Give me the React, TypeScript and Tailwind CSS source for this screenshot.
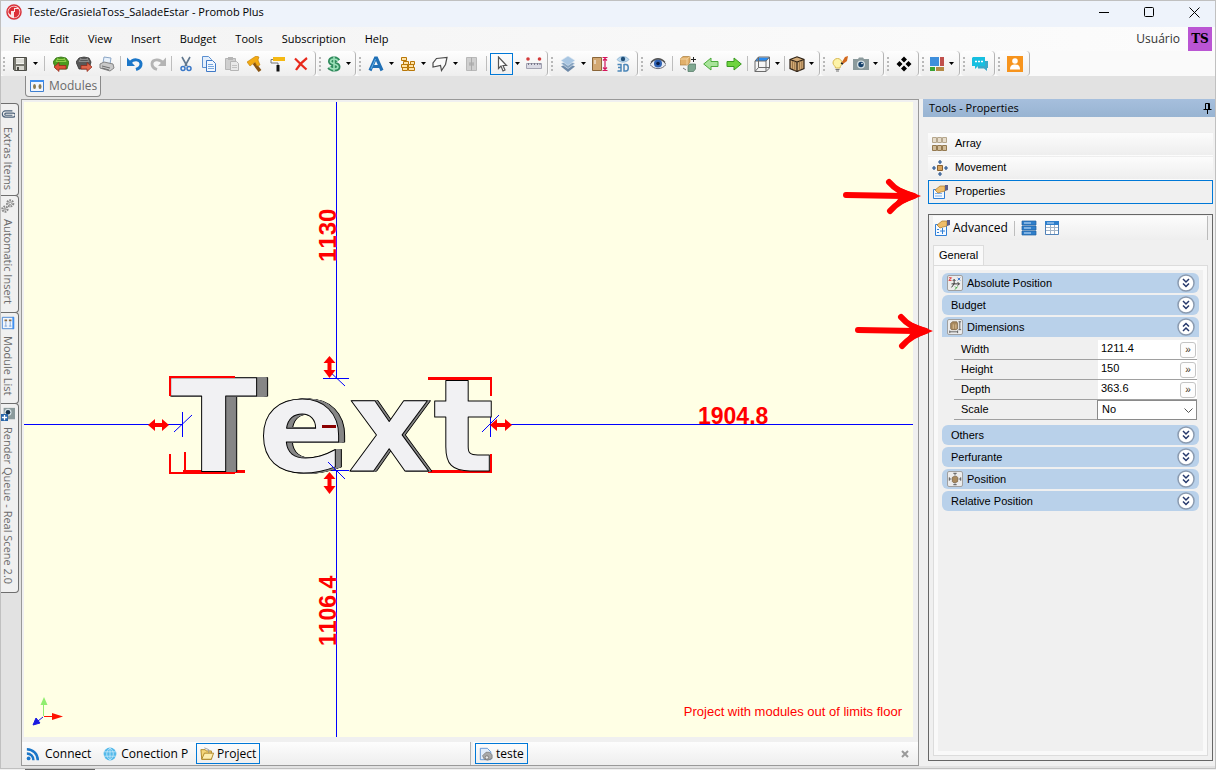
import type { ReactNode } from "react";

const ui = "font-['Open_Sans','Noto_Sans',sans-serif]";

const Icon = ({ children, size = 16 }: { children: ReactNode; size?: number }) => (
  <svg width={size} height={size} viewBox="0 0 16 16" fill="none" className="shrink-0" aria-hidden="true">
    {children}
  </svg>
);

const icons: Record<string, ReactNode> = {
  save: (
    <>
      <path d="M1.500 1.500h13v13h-12l-1-1z" fill="#77776f" stroke="#4b4b45" />
      <path d="M4 2h8v6H4z" fill="#f4f4f0" />
      <path d="M4 4h8M4 6h8" stroke="#c8c8c0" />
      <path d="M4 10h8v4H4z" fill="#d7d7d0" />
      <path d="M5 11h2v3H5z" fill="#4b4b45" />
    </>
  ),
  boxGreen: (
    <>
      <path d="M3 2l5-1 5 1 3 4-2 7H3L0 6z" fill="#4c9a1e" stroke="#2f6d10" strokeWidth=".8" />
      <path d="M4 3.500h8M3 5.500h10M5 2l-2 4M11 2l2 4" stroke="#8fd04c" />
      <path d="M1 11l5-4.500v3h7v3.500H6v2.500z" fill="#e0523a" stroke="#8d2416" strokeWidth=".7" />
    </>
  ),
  boxDark: (
    <>
      <path d="M3 2l5-1 5 1 2 4-2 7H3L0 6z" fill="#585858" stroke="#333" strokeWidth=".8" />
      <path d="M4 3.500h8M3 5.500h10M5 2l-2 4M11 2l2 4" stroke="#8c8c8c" />
      <path d="M16 11l-5-4.500v3H5v3.500h6v2.500z" fill="#e0654a" stroke="#8d2416" strokeWidth=".7" />
    </>
  ),
  printer: (
    <>
      <path d="M5 1l7 1-1 6-7-1z" fill="#e8f1fb" stroke="#8ba6c6" />
      <path d="M1 8l4-2 9 2 1 4-4 3-10-3z" fill="#c9c9c9" stroke="#858585" />
      <path d="M3 10l8 2M3 12l7 2" stroke="#6e6e6e" />
    </>
  ),
  undo: (
    <>
      <path d="M3 7C6 2.500 13.500 3 14 7.500c.2 3-2 5-5 6" stroke="#1b76c8" strokeWidth="3" />
      <path d="M0 1.500V10h8z" fill="#1b76c8" />
    </>
  ),
  redo: (
    <>
      <path d="M13 7C10 2.500 2.500 3 2 7.500c-.2 3 2 5 5 6" stroke="#b4b4b4" strokeWidth="2.800" />
      <path d="M16 1.500V10H8z" fill="#b4b4b4" />
    </>
  ),
  cut: (
    <>
      <path d="M4 1l5 9M12 1l-5 9" stroke="#61788f" strokeWidth="1.600" />
      <circle cx="5" cy="12.500" r="2" stroke="#3a78c8" strokeWidth="1.500" />
      <circle cx="11" cy="12.500" r="2" stroke="#3a78c8" strokeWidth="1.500" />
    </>
  ),
  copy: (
    <>
      <path d="M1.500.500h6l3 3v8h-9z" fill="#e3eefb" stroke="#5b8fd0" />
      <path d="M5.500 4.500h6l3 3v8h-9z" fill="#f1f7ff" stroke="#3f79c6" />
      <path d="M7 8.500h5M7 10.500h6M7 12.500h6" stroke="#79a7dd" />
    </>
  ),
  paste: (
    <>
      <path d="M1.500 2.500h10v11h-10z" fill="#cfcfcf" stroke="#b5b5b5" />
      <path d="M4 1h5v3H4z" fill="#b5b5b5" />
      <path d="M6.500 5.500h6l2 2v7h-8z" fill="#e9e9e9" stroke="#b5b5b5" />
      <path d="M8 9.500h5M8 11.500h5" stroke="#c2c2c2" />
    </>
  ),
  hammer: (
    <>
      <path d="M7 7l6 8" stroke="#8a5410" strokeWidth="3.500" />
      <path d="M0 6l9-6 3 1-1 3 2 5-3 1-2-4-5 4z" fill="#f2aa12" stroke="#c07c05" strokeWidth=".6" />
    </>
  ),
  roller: (
    <>
      <path d="M3 1h12v4H3z" fill="#f5b914" />
      <path d="M3 3.500H1v3.500h7v3" stroke="#777" />
      <path d="M6.500 9h3v6.500h-3z" fill="#111" />
    </>
  ),
  del: <path d="M2 2.500c3 3 7 7 11.500 11M14 2c-4 3-8 7-11 12" stroke="#e8291c" strokeWidth="2.200" />,
  money: (
    <>
      <path d="M12 5C10 2 4.500 2.500 4.500 5.500 4.500 8.500 12 7.500 12 10.700 12 13.800 5 13.500 3.500 11M8 .5v15" stroke="#2f8a5c" strokeWidth="5" />
      <path d="M12 5C10 2 4.500 2.500 4.500 5.500 4.500 8.500 12 7.500 12 10.700 12 13.800 5 13.500 3.500 11M8 1v14" stroke="#9be0b8" strokeWidth="1.600" />
    </>
  ),
  letter: (
    <>
      <path d="M2 14.500L7.500 2h1L14 14.500M4.500 10.500h7" stroke="#1f6fb5" strokeWidth="3.200" />
      <path d="M3 13L7.500 3" stroke="#5fb0e8" />
    </>
  ),
  bricks: (
    <path
      d="M1.500 1.500h5v3h-5zM3.500 5.500h5v3h-5zM10.500 5.500h4v3h-4zM1.500 8.500h6v3h-6zM8.500 8.500h5v3h-5zM2.500 11.500h5v3h-5zM8.500 11.500h6v3h-6z"
      fill="#ffe2a6"
      stroke="#b87708"
    />
  ),
  shape: <path d="M4.500 2.500L15 1.500l-1.500 7-4 6-1-5L1 11V7z" fill="#fbfbfb" stroke="#4c4c4c" strokeWidth="1.200" />,
  panel: (
    <>
      <path d="M2.500 1.500h10v13h-10z" fill="#cfcfcf" stroke="#b8b8b8" />
      <path d="M7.500 1.500v13M5 8h5M6 6v4M9 6v4" stroke="#aaa" />
    </>
  ),
  cursor: <path d="M4.500 1v11.500L7 10l2 5 2-1-2-4.500h3.500z" fill="#fff" stroke="#555" strokeWidth="1.200" />,
  ruler: (
    <>
      <path d="M.5 7.500h15v5H.5z" fill="#dadae4" stroke="#a3a3b2" />
      <path d="M2.500 7v2M5.500 7v2M8.500 7v2M11.500 7v2M14 7v2" stroke="#77778a" />
      <circle cx="2" cy="3" r="1.800" fill="#d43b3b" />
      <circle cx="13.500" cy="3" r="1.800" fill="#d43b3b" />
    </>
  ),
  layers: (
    <>
      <path d="M8 7l7 3.500L8 16l-7-5.500z" fill="#6d89a8" />
      <path d="M8 4.500l7 3-7 5-7-5z" fill="#86a3c0" stroke="#dfe9f3" strokeWidth=".6" />
      <path d="M8 0l7 4.500-7 5-7-5z" fill="#a9c6e2" stroke="#dfe9f3" strokeWidth=".6" />
    </>
  ),
  door: (
    <>
      <path d="M.5 1.500h9v13h-9z" fill="#d2a772" stroke="#8a6538" />
      <path d="M3 4v4" stroke="#fff" />
      <path d="M13 2v12M10.500 1.500h5M10.500 14.500h5M11 4.500l2-2 2 2M11 11.500l2 2 2-2" stroke="#d4145a" strokeWidth="1.200" />
    </>
  ),
  eye3d: (
    <>
      <path d="M2 3.500C5-.5 11-.5 14 3.500 11 7 5 7 2 3.500z" fill="#bcd9ef" stroke="#7ea8c8" strokeWidth=".7" />
      <circle cx="8" cy="3" r="2.200" fill="#1f4e78" />
      <path d="M2.500 8.500h3.500v6.500H2.500M3 11.500h3M9 8v7h2c3 0 3-6.500 0-6.500H9" stroke="#4b86b8" strokeWidth="1.500" />
    </>
  ),
  eye: (
    <>
      <path d="M0 8.500C4 1.500 12 1.500 16 8.500 12 14 4 14 0 8.500z" fill="#e9edf4" stroke="#6e6e7a" />
      <circle cx="8" cy="7.500" r="4" fill="#2f62b5" />
      <circle cx="8" cy="7.500" r="1.800" fill="#0b1d46" />
      <path d="M1 6.500C5 1.500 11 1.500 15 6.500" stroke="#555" strokeWidth="1.300" />
    </>
  ),
  boxes: (
    <>
      <path d="M0 3l3-2.500h7V6L8 9H0z" fill="#e2b06a" stroke="#a87c3c" strokeWidth=".7" />
      <path d="M0 3h7v6M7 3l3-2.500" stroke="#f6dcae" strokeWidth=".8" />
      <path d="M8 10l2-2h5.500v5l-2 2.500H8z" fill="#7fa891" stroke="#4f7661" strokeWidth=".7" />
      <path d="M13.500 1v5M11 3.500h5" stroke="#222" />
      <path d="M3 12l3 2" stroke="#777" />
    </>
  ),
  left: <path d="M.7 8L8 2v3.500h7v5H8V14z" fill="#a8e39a" stroke="#4cab3c" />,
  right: <path d="M15.300 8L8 2v3.500H1v5h7V14z" fill="#6fd43f" stroke="#3a9a20" />,
  cube: (
    <>
      <path d="M4 1.500h11.500l-3 3.500H1z" fill="#2b8cf0" />
      <path d="M1 5l3.500-4h11v11L12 15.500H1zM1 5h11v10.500M12 5l3.500-4M4.500 1v10.500h11M4.500 11.500L1 15.500" stroke="#6b6b6b" />
    </>
  ),
  crate: (
    <>
      <path d="M1 3.500L8 .8l7 2.700v9L8 15.500l-7-3z" fill="#d2ab78" stroke="#2d2115" strokeWidth="1.200" />
      <path d="M1 3.500L8 6l7-2.500M8 6v9.500" stroke="#2d2115" strokeWidth="1.200" />
      <path d="M3.500 5v8M5.700 5.500v9M10.500 5.500v9M12.800 5v8" stroke="#a17a4a" />
    </>
  ),
  bulb: (
    <>
      <path d="M1 7a4.500 4.500 0 119 0c0 2-2 3-2 5H3.500c0-2-2.500-3-2.500-5z" fill="#fdf3a8" stroke="#d8b84e" />
      <path d="M3.500 13.500h4M4 15h3" stroke="#777" />
      <path d="M10 6l3-5 3-1-1 5-4 3z" fill="#d2691e" />
      <path d="M9 7l2 1" stroke="#222" strokeWidth="1.500" />
    </>
  ),
  camera: (
    <>
      <path d="M0 3h5l1-1.500h4L11 3h5v11H0z" fill="#8b9a9c" />
      <circle cx="8" cy="8.500" r="4" fill="#d6e2e6" />
      <circle cx="8" cy="8.500" r="2.700" fill="#17426b" />
      <circle cx="9" cy="7.500" r=".8" fill="#fff" />
    </>
  ),
  diamonds: <path d="M8 .5L11 3.500 8 6.500 5 3.500zM8 9.500l3 3-3 3-3-3zM3.500 5l3 3-3 3-3-3zM12.500 5l3 3-3 3-3-3z" fill="#000" />,
  tiles: (
    <>
      <path d="M1 1h9v9H1z" fill="#3f8fdc" />
      <path d="M11 1h4v9h-4z" fill="#c0504d" />
      <path d="M1 11h5v4H1z" fill="#3aa335" />
      <path d="M7 11h8v4H7z" fill="#b58a45" />
    </>
  ),
  chat: (
    <>
      <path d="M5 5h11v7h-1v3l-3-2.500H6z" fill="#3aa9c9" />
      <path d="M1 1h12v9H6l-3 3v-3H0V2z" fill="#17bfe0" />
      <path d="M3 5.500h2M6 5.500h2M9 5.500h2" stroke="#fff" strokeWidth="1.500" />
    </>
  ),
  person: (
    <>
      <path d="M0 0h16v16H0z" fill="#f7941d" />
      <circle cx="8" cy="5" r="2.800" fill="#fff" />
      <path d="M3 13.500c0-4 2-5 5-5s5 1 5 5z" fill="#fff" />
    </>
  ),
  modules: (
    <>
      <path d="M1.500 2.500h13v11h-13z" fill="#f2f6fc" stroke="#3f7fd0" />
      <path d="M1 2h14v2H1z" fill="#3f8ff0" />
      <ellipse cx="5.500" cy="8.500" rx="1.500" ry="2.500" fill="#8a7a50" />
      <ellipse cx="11" cy="8.500" rx="1.500" ry="2.500" fill="#8a7a50" />
    </>
  ),
  array: (
    <>
      <path d="M.5 1.500h4v5h-4zM5.500 1.500h4v5h-4zM10.500 1.500h4v5h-4z" fill="#e6dccb" stroke="#b5a68c" />
      <path d="M.5 9.500h4v5h-4zM5.500 9.500h4v5h-4zM10.500 9.500h4v5h-4z" fill="#d0bb98" stroke="#94794f" />
    </>
  ),
  movement: (
    <>
      <path d="M5.500 5.500h5v5h-5z" fill="#d9a45b" stroke="#8a6130" />
      <path d="M8 0v4M6 2h4M8 12v4M6 14h4M0 8h4M2 6v4M12 8h4M14 6v4" stroke="#1f4e8c" strokeWidth="1.200" />
    </>
  ),
  properties: (
    <>
      <path d="M1.500 5.500h11v9h-11z" fill="#f4f9ff" stroke="#2f7fd6" />
      <path d="M3 9.500h7M3 12h7" stroke="#7fb0e8" />
      <path d="M3 6l5-4h5v5l-4 1-3 1z" fill="#efbd6a" stroke="#a8762a" strokeWidth=".7" />
      <path d="M13 1h3v5l-3 1z" fill="#5d5f8c" />
    </>
  ),
  advanced: (
    <>
      <path d="M1.500 4.500h11v11h-11z" fill="#f4f9ff" stroke="#2f7fd6" />
      <path d="M3 9.500h2M3 12.500h2M8.500 8v6M6 11h5" stroke="#2f7fd6" />
      <path d="M3 5l5-4h5v5l-4 1-3 1z" fill="#efbd6a" stroke="#a8762a" strokeWidth=".7" />
      <path d="M13 0h3v5l-3 1z" fill="#5d5f8c" />
    </>
  ),
  stack: (
    <>
      <path d="M1 1h14v4H1zM1 6h14v4H1zM1 11h14v4H1z" fill="#2f7fcb" stroke="#215f9e" strokeWidth=".7" />
      <path d="M3 3h7M3 8h7M3 13h7" stroke="#cfe5fa" />
    </>
  ),
  table: (
    <>
      <path d="M1.500 2.500h13v12h-13z" fill="#fff" stroke="#4f81b8" />
      <path d="M1 1h14v4H1z" fill="#2f7fcb" />
      <path d="M3 3h7" stroke="#cfe5fa" />
      <path d="M2 7.500h12M2 10.500h12M6.500 5v9M10.500 5v9" stroke="#a3b4c6" />
    </>
  ),
  clip: <path d="M13 4.500H5a3.500 3.500 0 000 7h9a2 2 0 000-4.500H5.500a1.200 1.200 0 000 2.400H13" stroke="#4a6078" strokeWidth="1.300" />,
  gears: (
    <>
      <circle cx="10.500" cy="5" r="3.500" stroke="#8a8a8a" strokeWidth="2.400" strokeDasharray="2 1" />
      <circle cx="10.500" cy="5" r="1.500" stroke="#8a8a8a" />
      <circle cx="4.500" cy="11.500" r="3" stroke="#8a8a8a" strokeWidth="2.400" strokeDasharray="2 1" />
      <circle cx="4.500" cy="11.500" r="1.200" stroke="#8a8a8a" />
    </>
  ),
  moduleList: (
    <>
      <path d="M1.500 1.500h13v13h-13z" fill="#f2f6fc" stroke="#3f7fd0" />
      <path d="M13 1h2v14h-2z" fill="#3f8ff0" />
      <path d="M4 4h3v2H4zM9 4h3v2H9z" fill="#8a6a40" />
      <path d="M5.500 6v6M4 11.500h3M10.500 6v6M9 11.500h3" stroke="#7fa6d8" />
    </>
  ),
  render: (
    <>
      <path d="M3 1h13v13H3z" fill="#8b9a9c" />
      <circle cx="8" cy="6" r="4" fill="#d6e2e6" />
      <circle cx="8" cy="6" r="2.600" fill="#17324b" />
      <path d="M0 8h8v8H0z" fill="#2563a8" />
      <path d="M4 9v6M1 12h6" stroke="#fff" strokeWidth="1.500" />
    </>
  ),
  rss: (
    <>
      <circle cx="3" cy="13" r="2.200" fill="#1b76c8" />
      <path d="M1 7.500A7.500 7.500 0 018.500 15M1 2.500A12.500 12.500 0 0113.500 15" stroke="#1b76c8" strokeWidth="2.800" />
    </>
  ),
  globe: (
    <>
      <circle cx="8" cy="8" r="7.300" fill="#54b9ea" />
      <path d="M1 5.500h14M1 10.500h14M8 1v14M8 1C3 5 3 11 8 15M8 1c5 4 5 10 0 14" stroke="#d4effc" strokeWidth=".8" />
    </>
  ),
  folder: (
    <>
      <path d="M1 3h5l1 1.500h6V14H2z" fill="#f4d67a" stroke="#a87f1c" />
      <path d="M5 1l5 2v4" stroke="#999" />
      <path d="M2 14l3-7h10.500L13 14z" fill="#fdeeb0" stroke="#a87f1c" />
    </>
  ),
  doc: (
    <>
      <path d="M1.500 1.500h8l4 4v9h-12z" fill="#e3eefb" stroke="#5b8fd0" />
      <path d="M4 10l4-4h4l3 3v4l-5 2-4-1z" fill="#a9a9a9" stroke="#6b6b6b" strokeWidth=".7" />
      <circle cx="9" cy="12" r="2" fill="#e8e8e8" stroke="#777" />
    </>
  ),
  axes: (
    <>
      <path d="M4 9h9M7 4v5l-3 4M11 7l2 2-2 2M5.500 5.500L7 4l1.500 1.500" stroke="#222" />
      <path d="M1 2h3L1 5h3" stroke="#d22" />
      <path d="M11 2l3 3M14 2l-3 3" stroke="#26c" />
      <path d="M8 12l1.500 1.500M11 12l-3 3.500" stroke="#292" />
    </>
  ),
  dims: (
    <>
      <path d="M3 4l2-2h5l1 2v6l-2 1H4l-1-1z" fill="#a98a5f" stroke="#6d5230" strokeWidth=".7" />
      <path d="M6 5v5M9 5v5" stroke="#e2c79d" />
      <path d="M13.500 2v9M12 2h3M12 11h3M2 13.500h9M2 12v3M11 12v3" stroke="#555" />
    </>
  ),
  pos: (
    <>
      <path d="M5 6l2-1h3l1 1v5l-2 1H6l-1-1z" fill="#a98a5f" stroke="#6d5230" strokeWidth=".7" />
      <path d="M8 1v3M6 1.500h4M8 13v2M6 14.500h4M1.500 6v4M1 8h3M14.500 6v4M12 8h3" stroke="#555" />
    </>
  ),
};

type Tool = { id: string; label: string; caret?: boolean; tight?: boolean; sep?: string; active?: boolean };

const toolGroups: { tools: Tool[]; pad: string }[] = [
  {
    pad: "pr-[3px]",
    tools: [
      { id: "save", label: "Save", caret: true },
      { id: "boxGreen", label: "Load module", sep: "w-[9px]" },
      { id: "boxDark", label: "Export module" },
      { id: "printer", label: "Print" },
      { id: "undo", label: "Undo", sep: "w-[5px]" },
      { id: "redo", label: "Redo" },
      { id: "cut", label: "Cut", sep: "w-[5px]" },
      { id: "copy", label: "Copy" },
      { id: "paste", label: "Paste" },
      { id: "hammer", label: "Build" },
      { id: "roller", label: "Paint" },
      { id: "del", label: "Delete" },
    ],
  },
  { pad: "pr-[2px]", tools: [{ id: "money", label: "Budget", caret: true, tight: true }] },
  {
    pad: "pr-[2px]",
    tools: [
      { id: "letter", label: "Text", caret: true },
      { id: "bricks", label: "Walls", caret: true },
      { id: "shape", label: "Shapes", caret: true },
      { id: "panel", label: "Panel" },
      { id: "cursor", label: "Select", caret: true, active: true, sep: "w-[7px]" },
      { id: "ruler", label: "Measure" },
    ],
  },
  {
    pad: "pr-[3px]",
    tools: [
      { id: "layers", label: "Layers", caret: true },
      { id: "door", label: "Door height" },
      { id: "eye3d", label: "3D view" },
    ],
  },
  {
    pad: "pr-[3px]",
    tools: [
      { id: "eye", label: "Visibility" },
      { id: "boxes", label: "Replace", sep: "w-[7px]" },
      { id: "left", label: "Previous" },
      { id: "right", label: "Next" },
      { id: "cube", label: "Top view", caret: true, sep: "w-[5px]" },
      { id: "crate", label: "Textures", caret: true, tight: true, sep: "w-[5px]" },
    ],
  },
  {
    pad: "pr-[3px]",
    tools: [
      { id: "bulb", label: "Lights" },
      { id: "camera", label: "Camera", caret: true, tight: true },
    ],
  },
  { pad: "pr-[3px]", tools: [{ id: "diamonds", label: "Snap" }] },
  { pad: "pr-[3px]", tools: [{ id: "tiles", label: "Windows", caret: true, tight: true }] },
  { pad: "pr-[3px]", tools: [{ id: "chat", label: "Chat" }] },
  { pad: "pr-[3px]", tools: [{ id: "person", label: "Account" }] },
];

const Toolbar = () => (
  <div className="flex h-[25px] shrink-0 gap-px bg-[#fafafa]">
    {toolGroups.map((group, index) => (
      <div
        key={index}
        className={`flex items-center rounded-sm border-r border-[#b4b4b4] bg-linear-to-b from-[#fefefe] to-[#eeeeee] ${group.pad}`}
      >
        <div className="h-[14px] w-[7px] pl-[2px]">
          <div className="h-full w-0 border-l-2 border-dotted border-[#b8b8b8]" />
        </div>
        {group.tools.map((tool) => (
          <div key={tool.id} className="flex h-full items-center">
            {tool.sep && (
              <div className={`flex justify-center ${tool.sep}`}>
                <div className="h-[15px] w-px bg-[#bdbdbd]" />
              </div>
            )}
            <button
              aria-label={tool.label}
              className={`flex h-[22px] items-center justify-center ${tool.tight ? "w-[20px]" : "w-[23px]"} ${
                tool.active ? "border border-[#0078d7]" : ""
              }`}
            >
              <Icon>{icons[tool.id]}</Icon>
            </button>
            {tool.caret && (
              <div className="flex w-[9px] justify-center">
                <svg width="5" height="3" viewBox="0 0 5 3" aria-hidden="true">
                  <path d="M0 0h5L2.500 3z" fill="#000" />
                </svg>
              </div>
            )}
          </div>
        ))}
      </div>
    ))}
  </div>
);

const sideTabs = [
  { id: "clip", label: "Extras Items", height: "h-[93px]" },
  { id: "gears", label: "Automatic Insert", height: "h-[118px]" },
  { id: "moduleList", label: "Module List", height: "h-[92px]" },
  { id: "render", label: "Render Queue - Real Scene 2.0", height: "h-[190px]" },
];

const SideTabs = () => (
  <div className="flex w-5 shrink-0 flex-col pt-1">
    {sideTabs.map((tab) => (
      <button
        key={tab.id}
        className={`-mb-px flex w-[18px] flex-col items-center gap-[6px] rounded-r-[4px] border border-l-0 border-[#6e6e6e] bg-[#f0f0f0] pt-[3px] pr-[3px] ${tab.height}`}
      >
        <Icon size={14}>{icons[tab.id]}</Icon>
        <span className="text-[11px] leading-[14px] whitespace-nowrap text-[#6a6a6a] [writing-mode:vertical-rl]">{tab.label}</span>
      </button>
    ))}
  </div>
);

// front face of each letter; the stacked shadows build the side that recedes to the right
const letters = [
  {
    char: "T",
    x: 170,
    side: "[filter:drop-shadow(1px_0_0_#868686)_drop-shadow(2px_0_0_#868686)_drop-shadow(4px_0_0_#868686)_drop-shadow(3px_0_0_#868686)_drop-shadow(1px_0_0_#000)]",
  },
  {
    char: "e",
    x: 258,
    side: "[filter:drop-shadow(1px_0_0_#868686)_drop-shadow(2px_0_0_#868686)_drop-shadow(2px_0_0_#868686)_drop-shadow(1px_0_0_#000)]",
  },
  { char: "x", x: 348, side: "[filter:drop-shadow(1px_0_0_#868686)_drop-shadow(1px_0_0_#868686)_drop-shadow(1px_0_0_#000)]" },
  { char: "t", x: 433, side: "" },
];

const Viewport = () => (
  <svg
    viewBox="24 102 889 635"
    preserveAspectRatio="xMidYMid slice"
    className="min-h-0 w-full flex-1 bg-[#ffffe5] font-['Liberation_Sans',Arial,sans-serif]"
    role="img"
    aria-label="Project view"
  >
    <g stroke="#0000ff" shapeRendering="crispEdges" fill="none">
      <path d="M336.500 102v277M336.500 471v266M24 424.500h159M490 424.500h423M323 378.500h26M323 470.500h26M182.500 412v25M490.500 412v25" />
    </g>

    <g stroke="#ff0000" strokeWidth="3" fill="none">
      <path d="M428 378.500h63M428 471.500h63M183 471.500h62" />
    </g>

    <g fontSize="128" fontWeight="700" fill="#f1f1f3" stroke="#000" strokeLinejoin="round" className="font-['DejaVu_Sans',sans-serif]">
      {letters.map(({ char, x, side }) => (
        <text key={char} x={x} y="471" className={side}>
          {char}
        </text>
      ))}
    </g>
    <path d="M322 426.500h14" stroke="#8b0000" strokeWidth="3" />
    <path d="M328 370l17 16M328 462l17 17M174 432l18-17M482 432l17-17" stroke="#0000ff" />

    <g stroke="#ff0000" strokeWidth="2" fill="none">
      <path d="M235 377h-65v19M170 454v19h65M185 452v19M491 377v19M491 454v19" />
    </g>

    <g fill="#ff0000">
      <path d="M148 425l7-6v4h7v-4l7 6-7 6v-4h-7v4z" />
      <path d="M490 425l7-6v4h8v-4l7 6-7 6v-4h-8v4z" />
      <path d="M329.500 356l6 7h-4v7h4l-6 8-6-8h4v-7h-4z" />
      <path d="M329.500 472l6 7h-4v7h4l-6 8-6-8h4v-7h-4z" />
    </g>

    <g fill="#ff0000" fontSize="23" fontWeight="700" className="[font-kerning:none]">
      <text x="698" y="424">1904.8</text>
      <text fontSize="24" transform="translate(336 262) rotate(-90)">1130</text>
      <text transform="translate(336 646) rotate(-90)">1106.4</text>
    </g>
    <text x="902" y="716" fontSize="13" textAnchor="end" fill="#ff0000" className="[font-kerning:none]">Project with modules out of limits floor</text>

    <g strokeWidth="1">
      <path d="M44 716.500h12" stroke="#f10" />
      <path d="M52 713l11 3.500-11 3.500z" fill="#f10" />
      <path d="M43.500 716v-12" stroke="#90ee70" />
      <path d="M40.500 705l3.500-8 3.500 8z" fill="#90ee70" />
      <path d="M43 717l-5 4" stroke="#1818e0" />
      <path d="M33 725l3-7 4 5z" fill="#1818e0" stroke="#1818e0" />
    </g>
  </svg>
);

const Pointer = ({ className }: { className: string }) => (
  <svg width="78" height="38" viewBox="0 0 78 38" fill="none" className={`pointer-events-none absolute z-10 ${className}`} aria-hidden="true">
    <path d="M3 17L60 18" stroke="#ff0000" strokeWidth="6" strokeLinecap="round" />
    <path d="M46 4c6 7 14 12 25 14-10 3-18 8-24 15" stroke="#ff0000" strokeWidth="6" strokeLinecap="round" strokeLinejoin="round" />
    <path d="M50 7l28 11-29 12 8-12z" fill="#ff0000" />
  </svg>
);

const SectionHeader = ({ label, icon, open }: { label: string; icon?: string; open?: boolean }) => (
  <button
    aria-expanded={!!open}
    className={`flex h-5 w-full items-center bg-[#b9d1ea] pr-[3px] text-left ${open ? "rounded-t-md" : "rounded-md"} ${icon ? "gap-1 pl-[5px]" : "pl-[9px]"}`}
  >
    {icon && (
      <span className="flex size-4 items-center justify-center rounded-xs border border-[#a0a0a0] bg-[#ececec]">
        <Icon size={14}>{icons[icon]}</Icon>
      </span>
    )}
    <span className="flex-1">{label}</span>
    <svg width="20" height="20" viewBox="0 0 20 20" fill="none" className={open ? "rotate-180" : ""} aria-hidden="true">
      <circle cx="10" cy="10" r="8" fill="#fff" stroke="#8b9bb0" strokeWidth="1.500" />
      <path d="M7 6l3 3 3-3M7 10.500l3 3 3-3" stroke="#26386b" strokeWidth="1.500" />
    </svg>
  </button>
);

const dimensions = [
  { id: "width", label: "Width", value: "1211.4" },
  { id: "height", label: "Height", value: "150" },
  { id: "depth", label: "Depth", value: "363.6" },
];

const DimensionFields = () => (
  <div className="mb-[3px] pt-[3px] pr-[2px] pl-3">
    {dimensions.map((field) => (
      <div key={field.id} className="flex h-5 items-center border-b border-[#a0a0a0]">
        <label htmlFor={field.id} className="flex-1 pl-[7px]">
          {field.label}
        </label>
        <div className="flex h-full w-[99px] items-center bg-white pr-px pl-[3px]">
          <input id={field.id} defaultValue={field.value} className="mb-[3px] w-0 flex-1 outline-none" />
          <button aria-label={`More ${field.label}`} className="flex size-4 items-center justify-center rounded-[3px] border border-[#c4c4c4] bg-[#fdfdfd] text-[10px] text-[#432]">
            »
          </button>
        </div>
      </div>
    ))}
    <div className="flex h-5 items-center border-b border-[#a0a0a0]">
      <label htmlFor="scale" className="flex-1 pl-[7px]">
        Scale
      </label>
      <div className="relative h-5 w-[100px]">
        <select id="scale" className="h-5 w-full appearance-none border border-[#8a8a8a] bg-white pb-[2px] pl-1 outline-none">
          <option>No</option>
          <option>Yes</option>
        </select>
        <svg width="9" height="5" viewBox="0 0 9 5" fill="none" className="pointer-events-none absolute top-2 right-1" aria-hidden="true">
          <path d="M.5.5l4 4 4-4" stroke="#555" />
        </svg>
      </div>
    </div>
  </div>
);

const panelRows = [
  { id: "array", label: "Array" },
  { id: "movement", label: "Movement" },
  { id: "properties", label: "Properties" },
];

const PropertiesPanel = () => (
  <aside className="flex w-[292px] shrink-0 flex-col">
    <header className={`flex h-[18px] shrink-0 items-center justify-between bg-linear-to-b from-[#a6bfdd] to-[#98b4d2] pr-[3px] pl-[6px] text-[11px] ${ui}`}>
      <h2>Tools - Properties</h2>
      <button aria-label="Pin panel">
        <svg width="9" height="11" viewBox="0 0 9 11" fill="none" aria-hidden="true">
          <path d="M2.500.5h4v6h-4zM5.500.5v6M.5 6.500h8M4.500 7v4" stroke="#000" />
        </svg>
      </button>
    </header>

    <div className="flex min-h-0 flex-1 flex-col pr-[2px] pb-[5px] pl-[5px] text-[11px] font-['Liberation_Sans',Arial,sans-serif]">
      <nav className="mt-[15px] flex flex-col">
        {panelRows.map((row) => (
          <button
            key={row.id}
            className={`relative flex h-6 items-center gap-[7px] border pb-px pl-[3px] text-left ${
              row.id === "properties" ? "border-[#0078d7] bg-[#f0f0f0]" : "border-transparent bg-linear-to-b from-[#fcfcfc] to-[#eeeeee]"
            }`}
          >
            <Icon>{icons[row.id]}</Icon>
            {row.label}
            {row.id === "properties" && <Pointer className="top-[-3px] left-[-86px]" />}
          </button>
        ))}
      </nav>

      <div className="mt-[10px] flex min-h-0 flex-1 flex-col border border-[#666] p-1 pt-px">
        <div className={`flex h-[24px] shrink-0 items-center border-r border-[#bbb] bg-linear-to-b from-[#fcfcfc] to-[#eeeeee] pl-px text-[12px] ${ui}`}>
          <button className="flex items-center gap-[3px]">
            <Icon>{icons.advanced}</Icon>
            Advanced
          </button>
          <div className="ml-[6px] h-[15px] w-px bg-[#bdbdbd]" />
          <button aria-label="Grouped" className="ml-[3px] flex w-[23px] justify-center">
            <Icon>{icons.stack}</Icon>
          </button>
          <button aria-label="Table" className="flex w-[23px] justify-center">
            <Icon>{icons.table}</Icon>
          </button>
        </div>

        <div role="tablist" className="mt-[5px] flex">
          <button role="tab" aria-selected="true" className="-mb-px h-[21px] border border-b-0 border-[#dcdcdc] bg-[#f9f9f9] px-[5px] pb-[2px]">
            General
          </button>
        </div>
        <div className="flex min-h-0 flex-1 flex-col border border-[#dcdcdc] bg-[#f9f9f9] p-[4px]">
          <div className="flex min-h-0 flex-1 flex-col gap-[2px] bg-[#f0f0f0] pt-[3px] pr-1 pl-[4px]">
            <SectionHeader label="Absolute Position" icon="axes" />
            <SectionHeader label="Budget" />
            <div className="relative">
              <SectionHeader label="Dimensions" icon="dims" open />
              <Pointer className="top-[-4px] left-[-87px]" />
              <DimensionFields />
            </div>
            <SectionHeader label="Others" />
            <SectionHeader label="Perfurante" />
            <SectionHeader label="Position" icon="pos" />
            <SectionHeader label="Relative Position" />
          </div>
        </div>
      </div>
    </div>
  </aside>
);

const BottomBar = () => (
  <footer className="mt-[5px] flex h-[23px] shrink-0 gap-[2px] text-[12px]">
    <div className="flex w-[449px] items-center border-r border-[#b4b4b4] bg-linear-to-b from-[#fdfdfd] to-[#eeeeee] pl-1">
      <button className="flex h-5 items-center gap-[5px] pr-3">
        <Icon size={14}>{icons.rss}</Icon>
        Connect
      </button>
      <button className="flex h-5 items-center gap-1 pr-2">
        <Icon size={14}>{icons.globe}</Icon>
        Conection P
      </button>
      <button className="flex h-[21px] items-center gap-[3px] border border-[#0078d7] px-[3px]">
        <Icon size={14}>{icons.folder}</Icon>
        Project
      </button>
    </div>
    <div className="flex flex-1 items-center justify-between bg-linear-to-b from-[#fdfdfd] to-[#eeeeee] pr-[9px] pl-[2px]">
      <button className="flex h-[21px] items-center gap-[3px] border border-[#0078d7] px-[3px]">
        <Icon size={14}>{icons.doc}</Icon>
        teste
      </button>
      <button aria-label="Close document">
        <svg width="8" height="8" viewBox="0 0 8 8" aria-hidden="true">
          <path d="M1 1l6 6M7 1L1 7" stroke="#9a9a9a" strokeWidth="2" />
        </svg>
      </button>
    </div>
  </footer>
);

const menus = ["File", "Edit", "View", "Insert", "Budget", "Tools", "Subscription", "Help"];

export default function App() {
  return (
    <div className={`flex h-screen flex-col overflow-hidden bg-[#f0f0f0] text-[12px] text-black ${ui}`}>
      <div className="flex min-h-0 flex-1 flex-col border border-[#c0c0c0] bg-[#e2e2e2]">
        <header className="flex h-[26px] shrink-0 items-center bg-[#eef3fb] pl-[5px]">
          <svg width="16" height="16" viewBox="0 0 16 16" fill="none" className="mb-1" aria-hidden="true">
            <circle cx="8" cy="8" r="7" fill="#fbe4e5" stroke="#d8343c" strokeWidth="1.500" />
            <path d="M8 2.500A5.500 5.500 0 002.500 9L5 11V7h3V4h3.500A5.500 5.500 0 008 2.500zM8 8v5.500A5.500 5.500 0 0013.500 8c0-1-.5-2-1-3H9v3z" fill="#dc2f38" />
          </svg>
          <h1 className="mb-1 ml-[6px] flex-1 text-[11px]">Teste/GrasielaToss_SaladeEstar - Promob Plus</h1>
          <div className="mb-1 flex items-center">
            <button aria-label="Minimize" className="flex w-[45px] justify-center">
              <svg width="11" height="11" fill="none" aria-hidden="true">
                <path d="M0 5.500h10" stroke="#000" />
              </svg>
            </button>
            <button aria-label="Maximize" className="flex w-[45px] justify-center">
              <svg width="11" height="11" fill="none" aria-hidden="true">
                <rect x=".5" y=".5" width="9" height="9" rx="1" stroke="#000" />
              </svg>
            </button>
            <button aria-label="Close" className="mr-[-2px] flex w-[45px] justify-center">
              <svg width="11" height="11" fill="none" aria-hidden="true">
                <path d="M.5.500l10 10M10.500.500l-10 10" stroke="#000" />
              </svg>
            </button>
          </div>
        </header>

        <div className="flex h-6 shrink-0 items-center bg-linear-to-r from-[#f3f3f3] to-[#fcfcfc] pr-[3px] pl-3">
          <nav className="flex flex-1 gap-[19px] text-[11px]">
            {menus.map((menu) => (
              <button key={menu}>{menu}</button>
            ))}
          </nav>
          <span className="text-[#333]">Usuário</span>
          <span className="ml-2 flex size-6 items-center justify-center bg-[#ba55d3] text-[12px] font-bold font-['DejaVu_Serif',serif]">TS</span>
        </div>

        <Toolbar />

        <div className="h-[23px] shrink-0 pl-6">
          <button className="flex h-[21px] w-19 items-center gap-1 rounded-b-[4px] border border-t-0 border-[#8a8a8a] bg-[#f0f0f0] pl-[3px] text-[#6a6a6a]">
            <Icon>{icons.modules}</Icon>
            Modules
          </button>
        </div>

        <div className="flex min-h-0 flex-1">
          <SideTabs />
          <div className="flex min-w-0 flex-1 bg-[#f0f0f0]">
            <main className="flex min-w-0 flex-1 flex-col border border-[#999]">
              <div className="flex min-h-0 flex-1 flex-col pt-[2px] pr-[5px] pl-[2px]">
                <Viewport />
              </div>
              <BottomBar />
            </main>
            <div className="w-1 shrink-0" />
            <PropertiesPanel />
          </div>
        </div>
        <div className="h-[2px] shrink-0" />
      </div>
      <div className="h-px shrink-0 pl-[25px]">
        <div className="h-px w-[70px] bg-[#666]" />
      </div>
    </div>
  );
}
